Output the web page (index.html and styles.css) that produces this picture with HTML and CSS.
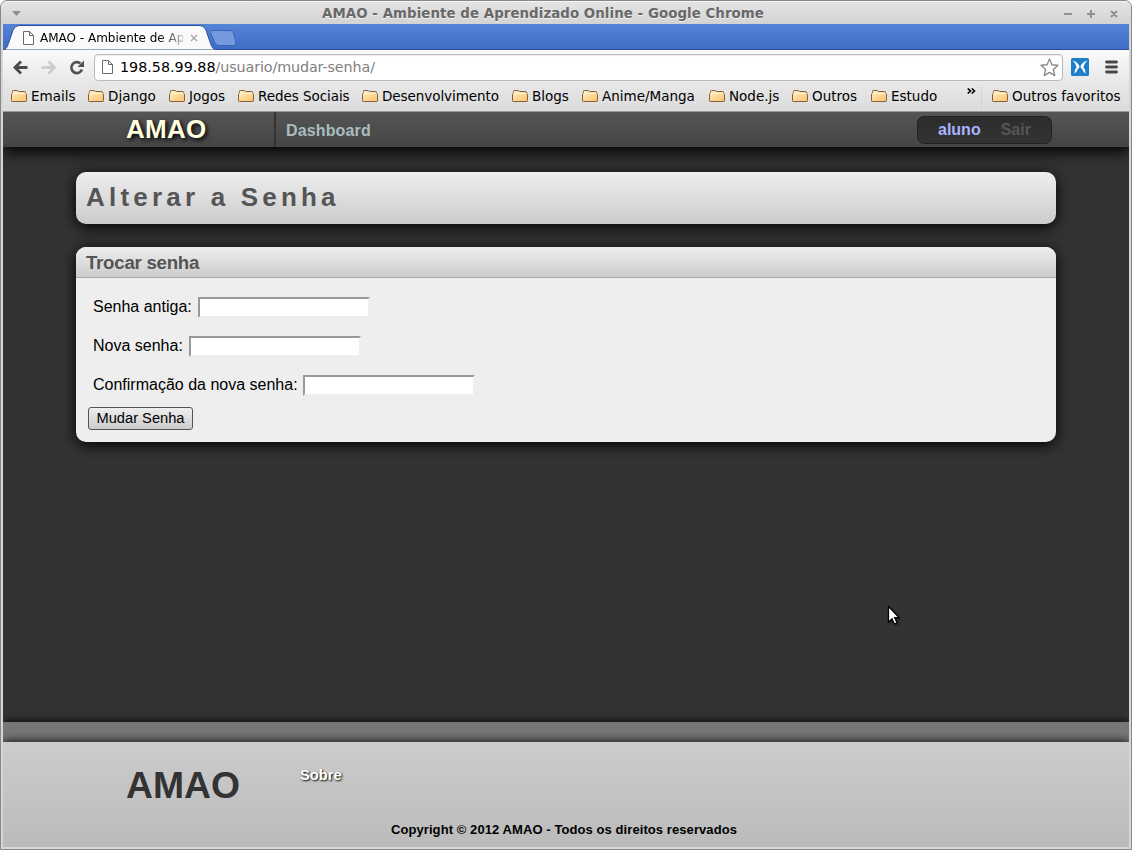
FILE: index.html
```html
<!DOCTYPE html>
<html lang="pt-BR">
<head>
<meta charset="utf-8">
<title>AMAO - Ambiente de Aprendizado Online</title>
<link rel="stylesheet" href="styles.css">
</head>
<body>
<svg class="defs" width="0" height="0">
  <defs>
    <linearGradient id="fold" x1="0" y1="0" x2="1" y2="1"><stop offset="0" stop-color="#fff0c8"/><stop offset="1" stop-color="#fcc268"/></linearGradient>
    <symbol id="folder" viewBox="0 0 16 14"><path d="M1.500 3.500V2.200Q1.500 1.500 2.200 1.500H6.300L7.500 2.500H13.800Q14.500 2.500 14.500 3.500V4.500Q15.500 4.500 15.500 5.200V11.800Q15.500 12.500 14.800 12.500H1.200Q.5 12.500 .5 11.800V5.200Q.5 4.500 1.500 4.500Z" fill="url(#fold)" stroke="#85603f"/><path d="M1.500 4.500H14.500" stroke="#fff3d5" stroke-width="1"/></symbol>
    <symbol id="page" viewBox="0 0 11 14"><path d="M.5.5H6.500L10.500 4.500V13.500H.5Z" fill="#fff" stroke="#6b6b6b"/><path d="M6.500.5V4.500H10.500" fill="none" stroke="#6b6b6b"/></symbol>
  </defs>
</svg>
<div class="window">
  <header class="titlebar">
    <svg class="winmenu" width="9" height="5"><path d="M0 0H9L4.500 5Z" fill="#909090"/></svg>
    <span class="wintitle">AMAO - Ambiente de Aprendizado Online - Google Chrome</span>
    <svg class="winbuttons" width="55" height="10" fill="none" stroke="#909090" stroke-width="2"><path d="M0 5H8M23 5H31M27 1V9M47 2L53 8M53 2L47 8"/></svg>
  </header>
  <div class="tabs">
    <svg class="tabshape" width="240" height="26"><path d="M0 26C4 25 4 23 6 18L10 6Q12 1.500 16 1.500H197Q201 1.500 203 6L207 18C209 23 209 25 214 26Z" fill="#fafafa" stroke="#2b509c"/><path d="M209.500 6.500H227Q229.500 6.500 230.500 9L232.500 17Q233.500 21.500 230 21.500H216Q213 21.500 212 19L208 10Q206.500 6.500 209.500 6.500Z" fill="#7599dc" stroke="#3c64b4"/></svg>
    <div class="tab"><svg width="11" height="14"><use href="#page"/></svg><span class="tabtitle">AMAO - Ambiente de Ap</span><svg width="8" height="8"><path d="M1 1L7 7M7 1L1 7" stroke="#aaa" stroke-width="1.500"/></svg></div>
  </div>
  <div class="toolbar">
    <svg class="navicons" width="74" height="20" fill="none" stroke-width="2.800"><path d="M10 4.500L4 10.500L10 16.500M3.500 10.500H16.500" stroke="#4b4b4b"/><path d="M30.500 10.500H43M37.500 4.500L43.500 10.500L37.500 16.500" stroke="#cdcdcd"/><path d="M69.500 6.500A5.500 5.500 0 1 0 71 12.500" stroke="#505050" stroke-width="2.600"/><path d="M73 3.500V10H66.500Z" fill="#505050"/></svg>
    <div class="address"><svg width="11" height="14"><use href="#page"/></svg><span class="url"><b>198.58.99.88</b>/usuario/mudar-senha/</span><svg class="star" width="19" height="19" viewBox="0 0 18 18"><path d="M9 1L11.300 6.400L17 6.900L12.700 10.900L14 16.700L9 13.700L4 16.700L5.300 10.900L1 6.900L6.700 6.400Z" fill="#fff" stroke="#8a8a8a" stroke-width="1.300" stroke-linejoin="round"/></svg></div>
    <svg class="ext" width="18" height="18"><rect width="18" height="18" rx="1.500" fill="#1d80c8"/><path d="M1.800 2.500Q6.800 4 8.700 8.700Q8 10 6.800 11.200Q6 14 3.300 15.500Q4 13.500 3.800 11.800Q5 11 5.500 9.800Q5 5.500 1.800 2.500ZM16.200 2.500Q11.200 4 9.300 8.700Q10 10 11.200 11.200Q12 14 14.700 15.500Q14 13.500 14.200 11.800Q13 11 12.500 9.800Q13 5.500 16.200 2.500Z" fill="#fff"/></svg>
    <svg class="menu" width="13" height="14"><path d="M1.500 2H11.500M1.500 7H11.500M1.500 12H11.500" stroke="#484848" stroke-width="2.800" stroke-linecap="round"/></svg>
  </div>
  <nav class="bookmarks">
    <a class="b1"><svg><use href="#folder"/></svg>Emails</a>
    <a class="b2"><svg><use href="#folder"/></svg>Django</a>
    <a class="b3"><svg><use href="#folder"/></svg>Jogos</a>
    <a class="b4"><svg><use href="#folder"/></svg>Redes Sociais</a>
    <a class="b5"><svg><use href="#folder"/></svg>Desenvolvimento</a>
    <a class="b6"><svg><use href="#folder"/></svg>Blogs</a>
    <a class="b7"><svg><use href="#folder"/></svg>Anime/Manga</a>
    <a class="b8"><svg><use href="#folder"/></svg>Node.js</a>
    <a class="b9"><svg><use href="#folder"/></svg>Outros</a>
    <a class="b10"><svg><use href="#folder"/></svg>Estudo</a>
    <svg class="more" width="9" height="7" fill="none" stroke="#000" stroke-width="1.600"><path d="M.7.5L3.500 3L.7 5.500M4.700.5L7.500 3L4.700 5.500"/></svg>
    <i class="rule"></i>
    <a><svg><use href="#folder"/></svg>Outros favoritos</a>
  </nav>
  <main class="page">
    <div class="topbar"><div class="brand">AMAO</div><div class="dash">Dashboard</div><div class="user"><span>aluno</span><span class="out">Sair</span></div></div>
    <div class="content">
      <h1>Alterar a Senha</h1>
      <section class="panel">
        <h2>Trocar senha</h2>
        <form>
          <label><span>Senha antiga:</span><input type="password"></label>
          <label><span>Nova senha:</span><input type="password"></label>
          <label><span>Confirmação da nova senha:</span><input type="password"></label>
          <button type="button">Mudar Senha</button>
        </form>
      </section>
    </div>
    <div class="strip"></div>
    <footer><div class="footrow"><div class="footbrand">AMAO</div><div class="about">Sobre</div></div><div class="copy">Copyright © 2012 AMAO - Todos os direitos reservados</div></footer>
  </main>
</div>
<svg class="cursor" width="16" height="22"><path d="M1.500 1.500V17L5 13.800L7.500 19L10 17.800L7.600 12.700H12Z" fill="#fff" stroke="#000" stroke-width="1.200"/></svg>
</body>
</html>
```

FILE: styles.css
```css
* { box-sizing: border-box; }
html { background: #fff; }
body { margin: 0; width: 1132px; height: 850px; overflow: hidden; font-family: "Liberation Sans", Arial, sans-serif; position: relative; }
svg { display: block; flex: none; }
.defs { position: absolute; }
.window { height: 850px; border: 1px solid #888; border-radius: 7px 7px 0 0; padding: 0 2px 2px; background: #d6d6d6; display: flex; flex-direction: column; overflow: hidden; }
.titlebar { height: 23px; flex: none; margin: 0 -2px; padding: 1px 12px 0 11px; display: flex; align-items: center; background: linear-gradient(#e4e4e4, #d3d3d3); border-top: 1px solid #f5f5f5; }
.wintitle { flex: 1; text-align: center; font: bold 13.330px/20px "DejaVu Sans", sans-serif; letter-spacing: .08px; color: #686868; text-shadow: 0 1px #f2f2f2; padding-left: 1px; white-space: nowrap; }
.tabs { height: 26px; flex: none; position: relative; background: linear-gradient(#5484d8, #3f6dc6); border-bottom: 1px solid #2b509c; }
.tabshape { position: absolute; left: 0; top: 0; }
.tab { position: relative; display: flex; align-items: center; height: 27px; padding-left: 20px; width: 196px; font: 12px "DejaVu Sans", sans-serif; }
.tabtitle { margin-left: 6px; width: 143px; margin-right: 7px; white-space: nowrap; overflow: hidden; color: transparent; background: linear-gradient(90deg, #000 118px, #bbb); background-clip: text; -webkit-background-clip: text; }
.toolbar { height: 34px; flex: none; display: flex; align-items: center; padding: 0 11px 0 8px; background: linear-gradient(#fafafa, #e7e7e7); }
.address { width: 969px; height: 27px; margin-left: 9px; border: 1px solid #bababa; border-radius: 4px; background: #fff; display: flex; align-items: center; padding: 0 3px 0 7px; box-shadow: inset 0 1px 1px #eee; }
.star { margin-top: 1px; }
.url { flex: 1; margin-left: 7px; font: 14.300px "DejaVu Sans", sans-serif; letter-spacing: -.1px; color: #808080; }
.url b { font-weight: 400; color: #000; letter-spacing: 0; }
.ext { margin-left: 8px; }
.menu { margin-left: auto; }
.bookmarks { height: 28px; flex: none; padding: 0 8px; display: flex; align-items: center; background: linear-gradient(#e7e7e7, #dcdcdc); border-bottom: 1px solid #999; font: 13.500px "DejaVu Sans", sans-serif; color: #000; }
.bookmarks a { display: flex; align-items: center; gap: 4px; white-space: nowrap; padding-bottom: 3px; flex: none; }
.bookmarks a svg { width: 16px; height: 14px; }
.b1 { width: 77px; } .b2 { width: 81px; } .b3 { width: 69px; } .b4 { width: 124px; } .b5 { width: 150px; } .b6 { width: 70px; } .b7 { width: 127px; } .b8 { width: 83px; } .b9 { width: 79px; } .b10 { width: 93px; }
.bookmarks .b4, .bookmarks .b5 { letter-spacing: -.06px; }
.more { margin: -12px 0 0 3px; }
.rule { width: 1px; height: 22px; margin: 0 10px 0 5px; background: #cdd2e6; }
.page { flex: 1; min-height: 0; background: #333; display: flex; flex-direction: column; overflow: hidden; }
.topbar { height: 35px; flex: none; position: relative; z-index: 1; background: linear-gradient(#555, #444); box-shadow: 0 5px 15px #000; display: flex; align-items: center; padding-left: 123px; padding-right: 77px; font-size: 16px; font-weight: bold; }
.brand { width: 150px; height: 35px; align-self: start; border-right: 2px solid #333; font-size: 26px; letter-spacing: .3px; line-height: 35px; color: #ffffe0; text-shadow: 2px 2px 4px #000; }
.dash { padding: 2px 0 0 10px; letter-spacing: .14px; color: #a9bdbf; }
.user { margin-left: auto; width: 135px; height: 28px; margin-top: 1px; border: 1px solid #222; border-radius: 7px; background: linear-gradient(#2c2c2c, #333); color: #aab4ff; display: flex; gap: 20px; padding: 4px 20px; line-height: 18px; }
.out { color: #555; }
.content { flex: 1; width: 980px; margin: 0 auto; padding-top: 25px; }
h1 { margin: 0; height: 52px; padding: 0 10px; border-radius: 10px; background: linear-gradient(#eee, #ccc); color: #555; font-size: 26px; line-height: 50px; letter-spacing: 4.200px; box-shadow: 0 3px 15px #000; }
.panel { margin-top: 23px; height: 195px; border-radius: 10px; background: #eee; box-shadow: 0 3px 15px #000; }
h2 { margin: 0; height: 31px; padding: 0 10px; border-radius: 10px 10px 0 0; border-bottom: 1px solid #aaa; background: linear-gradient(#eee, #ccc); color: #555; font-size: 18.700px; line-height: 32px; letter-spacing: -.27px; }
form { padding: 19px 12px 0; }
label { display: flex; align-items: center; height: 21px; margin: 0 0 18px 5px; font-size: 16px; line-height: 20px; white-space: nowrap; }
label span { padding-bottom: 2px; }
input { width: 172px; height: 21px; margin: 0 0 0 6px; padding: 0; border: 2px solid #eee; border-color: #999 #eee #eee #999; background: #fff; }
label:nth-of-type(3) { margin-bottom: 11px; }
label:nth-of-type(3) input { margin-left: 5px; }
button { display: block; width: 105px; height: 23px; padding: 0; border: 1px solid #555; border-radius: 3px; background: linear-gradient(#eee, #ccc); color: #000; font: 14.670px/19px "Liberation Sans", sans-serif; }
.strip { height: 20px; flex: none; background: #777; box-shadow: 0 0 10px #000; }
footer { height: 105px; flex: none; position: relative; background: linear-gradient(#ccc, #bbb); box-shadow: 0 0 10px #000; font-weight: bold; }
.footrow { height: 79px; display: flex; padding: 22px 0 0 123px; }
.footbrand { width: 174px; font-size: 37.300px; line-height: 43px; color: #333; }
.about { padding-top: 2px; font-size: 14.700px; line-height: 18px; color: #fff; text-shadow: 1px 1px 2px #000; }
.copy { text-align: center; font-size: 13px; letter-spacing: .08px; line-height: 17px; padding-right: 4px; }
.cursor { position: absolute; left: 887px; top: 605px; filter: drop-shadow(1px 1px 1px rgba(0,0,0,.5)); }
```
